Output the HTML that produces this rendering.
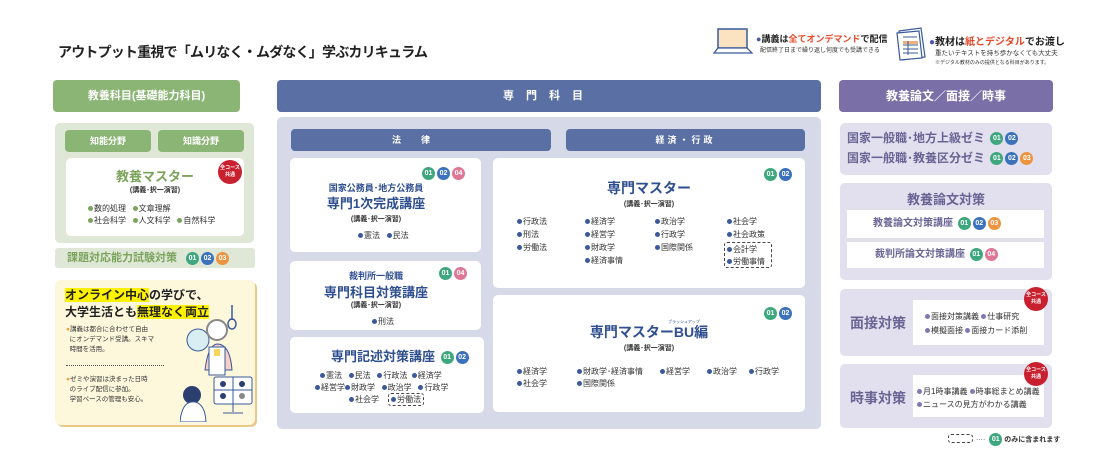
<!DOCTYPE html>
<html><head><meta charset="utf-8"><style>
*{margin:0;padding:0;box-sizing:border-box}
body{width:1115px;height:460px;background:#fff;position:relative;overflow:hidden;font-family:"Liberation Sans","Noto Sans CJK JP",sans-serif;color:#333}
.a{position:absolute}
.c{text-align:center}
.b{font-weight:bold}
.bd{display:inline-block;width:13px;height:13px;border-radius:50%;color:#fff;font-size:7px;font-weight:bold;line-height:13px;text-align:center;vertical-align:middle;margin-left:2px}
.g{background:#3fa77e}.u{background:#3c72bb}.o{background:#ec9440}.p{background:#e07696}
.wb{background:#fff;border-radius:5px}
.li{font-size:8px;color:#333;white-space:nowrap}
.li i{display:inline-block;width:5px;height:5px;border-radius:50%;background:#3c5a9a;margin-right:1px;vertical-align:middle}
.lg i{background:#7ba45c}
.lp i{background:#8278b4}
.red{position:absolute;width:24px;height:24px;border-radius:50%;background:#c8202f;color:#fff;font-size:5px;font-weight:bold;text-align:center;line-height:7px;padding-top:5px}
.nv{color:#2f4f8f}
.dash{border:1px dashed #444;border-radius:3px}
</style></head><body>

<div class="a b" style="left:58px;top:42px;font-size:14px;color:#222;letter-spacing:-0.8px">アウトプット重視で「ムリなく・ムダなく」学ぶカリキュラム</div>

<svg class="a" style="left:713px;top:28px" width="40" height="26" viewBox="0 0 40 26"><rect x="5" y="1" width="29" height="19" fill="#fbe2c0" stroke="#3a5a9a" stroke-width="1.5"/><path d="M1 25 L5 20 H34 L39 25 Z" fill="#fff" stroke="#3a5a9a" stroke-width="1.3"/></svg>
<div class="a b" style="left:756px;top:32px;font-size:9px;color:#222"><span style="color:#4b5aa5">●</span>講義は<span style="color:#e84a2a">全てオンデマンド</span>で配信</div>
<div class="a" style="left:760px;top:45px;font-size:6px;color:#333">配信終了日まで繰り返し何度でも受講できる</div>
<svg class="a" style="left:895px;top:27px" width="32" height="34" viewBox="0 0 32 34"><path d="M4 4 L26 1 L30 30 L7 33 Z" fill="#fff" stroke="#3a5a9a" stroke-width="1.2"/><path d="M2 6 L24 4 L27 31 L5 33 Z" fill="#fff" stroke="#3a5a9a" stroke-width="1.2"/><rect x="8" y="14" width="15" height="3" fill="#f4b07a"/><path d="M8 10h14M8 18h15M8 22h15M8 26h15M13 14v14" stroke="#3a5a9a" stroke-width="1"/></svg>
<div class="a b" style="left:929px;top:33px;font-size:10px;color:#222"><span style="color:#4b5aa5">●</span>教材は<span style="color:#e84a2a">紙とデジタル</span>でお渡し</div>
<div class="a" style="left:935px;top:47px;font-size:6.5px;color:#333">重たいテキストを持ち歩かなくても大丈夫</div>
<div class="a" style="left:935px;top:59px;font-size:5px;color:#333">※デジタル教材のみの提供となる科目があります。</div>

<div class="a c b" style="left:53px;top:80px;width:187px;height:32px;background:#8bb574;border-radius:4px;color:#fff;font-size:11px;line-height:32px">教養科目(基礎能力科目)</div>
<div class="a c b" style="left:277px;top:80px;width:544px;height:32px;background:#5a6fa3;border-radius:4px;color:#fff;font-size:11px;line-height:32px;letter-spacing:12px">専門科目</div>
<div class="a c b" style="left:839px;top:80px;width:214px;height:32px;background:#7b6fa8;border-radius:4px;color:#fff;font-size:12px;line-height:32px">教養論文／面接／時事</div>

<div class="a" style="left:55px;top:123px;width:199px;height:120px;background:#dfe7d6;border-radius:5px"></div>
<div class="a c b" style="left:65px;top:130px;width:86px;height:22px;background:#8bb574;border-radius:4px;color:#fff;font-size:9px;line-height:22px">知能分野</div>
<div class="a c b" style="left:158px;top:130px;width:86px;height:22px;background:#8bb574;border-radius:4px;color:#fff;font-size:9px;line-height:22px">知識分野</div>
<div class="a wb" style="left:66px;top:158px;width:178px;height:78px"></div>
<div class="a c b" style="left:66px;top:166px;width:178px;font-size:13px;color:#7ba45c">教養マスター</div>
<div class="a c b" style="left:66px;top:185px;width:178px;font-size:7px;color:#333">(講義･択一演習)</div>
<div class="red" style="left:218px;top:160px">全コース<br>共通</div>
<div class="a li lg" style="left:88px;top:203px"><i></i>数的処理 &nbsp;&nbsp;<i></i>文章理解</div>
<div class="a li lg" style="left:88px;top:215px"><i></i>社会科学 &nbsp;&nbsp;<i></i>人文科学 &nbsp;&nbsp;<i></i>自然科学</div>
<div class="a" style="left:55px;top:248px;width:200px;height:20px;background:#dfe7d6;border-radius:3px"></div>
<div class="a b" style="left:67px;top:250px;font-size:11px;color:#7ba45c;line-height:16px">課題対応能力試験対策 <span class="bd g" style="margin-left:6px">01</span><span class="bd u">02</span><span class="bd o">03</span></div>

<div class="a" style="left:55px;top:280px;width:200px;height:145px;background:#fdf7dc;border-radius:6px;box-shadow:2px 2px 0 #e8c98a"></div>
<div class="a b" style="left:65px;top:287px;font-size:12px;line-height:17px;color:#222"><span style="background:#fff200">オンライン中心</span>の学びで、<br>大学生活とも<span style="background:#fff200">無理なく両立</span></div>
<div class="a" style="left:66px;top:325px;font-size:6.5px;line-height:10px;color:#333"><span style="color:#f0a040">●</span>講義は都合に合わせて自由<br>&nbsp;&nbsp;にオンデマンド受講。スキマ<br>&nbsp;&nbsp;時間を活用。</div>
<div class="a" style="left:66px;top:365px;width:98px;border-top:1px dotted #555"></div>
<div class="a" style="left:66px;top:375px;font-size:6.5px;line-height:10px;color:#333"><span style="color:#f0a040">●</span>ゼミや演習は決まった日時<br>&nbsp;&nbsp;のライブ配信に参加。<br>&nbsp;&nbsp;学習ペースの管理も安心。</div>
<svg class="a" style="left:180px;top:300px" width="75" height="122" viewBox="0 0 75 122">
<path d="M52 5v15" stroke="#3a5a9a" stroke-width="1.5"/><ellipse cx="52" cy="24" rx="4" ry="5" fill="none" stroke="#3a5a9a" stroke-width="1.5"/>
<circle cx="18" cy="40" r="11" fill="#d8eef2" stroke="#3a5a9a"/>
<circle cx="37" cy="30" r="10" fill="#fff" stroke="#888" stroke-width="2"/>
<path d="M25 70 Q28 45 37 44 Q50 44 52 70 Z" fill="#f7cfc4" stroke="#3a5a9a"/>
<rect x="29" y="47" width="16" height="28" fill="#fff" stroke="#3a5a9a"/>
<rect x="34" y="49" width="6" height="7" fill="#f6d55a"/>
<circle cx="12" cy="95" r="9" fill="#2b3f70"/><path d="M0 122 Q2 100 15 102 Q25 104 26 122Z" fill="#fff" stroke="#3a5a9a"/>
<rect x="34" y="77" width="38" height="27" rx="2" fill="#fff" stroke="#3a5a9a"/>
<path d="M53 77v27M34 90h38M53 104v8M43 113h20" stroke="#3a5a9a"/>
<circle cx="43" cy="84" r="3" fill="#2b3f70"/><circle cx="62" cy="84" r="3" fill="#2b3f70"/><circle cx="43" cy="96" r="3" fill="#2b3f70"/><circle cx="62" cy="96" r="3" fill="#888"/>
</svg>

<div class="a" style="left:277px;top:117px;width:544px;height:312px;background:#d5d9e8;border-radius:5px"></div>
<div class="a c b" style="left:291px;top:129px;width:260px;height:22px;background:#5a6fa3;border-radius:4px;color:#fff;font-size:9px;line-height:22px;letter-spacing:20px">法律</div>
<div class="a c b" style="left:566px;top:129px;width:239px;height:22px;background:#5a6fa3;border-radius:4px;color:#fff;font-size:9px;line-height:22px;letter-spacing:3px">経済・行政</div>

<div class="a wb" style="left:290px;top:158px;width:191px;height:94px"></div>
<div class="a" style="left:420px;top:165px"><span class="bd g">01</span><span class="bd u">02</span><span class="bd p">04</span></div>
<div class="a c b nv" style="left:290px;top:181px;width:172px;font-size:9px">国家公務員･地方公務員</div>
<div class="a c b nv" style="left:290px;top:193px;width:172px;font-size:13px">専門1次完成講座</div>
<div class="a c b" style="left:290px;top:214px;width:172px;font-size:7px">(講義･択一演習)</div>
<div class="a li" style="left:358px;top:230px"><i></i>憲法 &nbsp;&nbsp;<i></i>民法</div>

<div class="a wb" style="left:290px;top:261px;width:191px;height:69px"></div>
<div class="a" style="left:437px;top:265px"><span class="bd g">01</span><span class="bd p">04</span></div>
<div class="a c b nv" style="left:290px;top:269px;width:172px;font-size:9px">裁判所一般職</div>
<div class="a c b nv" style="left:290px;top:282px;width:172px;font-size:13px">専門科目対策講座</div>
<div class="a c b" style="left:290px;top:300px;width:172px;font-size:7px">(講義･択一演習)</div>
<div class="a li" style="left:372px;top:316px"><i></i>刑法</div>

<div class="a wb" style="left:290px;top:337px;width:194px;height:76px"></div>
<div class="a b nv" style="left:331px;top:346px;font-size:13px">専門記述対策講座 <span class="bd g">01</span><span class="bd u">02</span></div>
<div class="a li" style="left:320px;top:370px"><i></i>憲法 &nbsp;&nbsp;<i></i>民法 &nbsp;&nbsp;<i></i>行政法 &nbsp;<i></i>経済学</div>
<div class="a li" style="left:315px;top:382px"><i></i>経営学<i></i>財政学 &nbsp;&nbsp;<i></i>政治学 &nbsp;&nbsp;<i></i>行政学</div>
<div class="a li" style="left:349px;top:394px"><i></i>社会学 &nbsp;</div>
<div class="a li dash" style="left:388px;top:393px;padding:0 2px"><i></i>労働法</div>

<div class="a wb" style="left:493px;top:158px;width:312px;height:130px"></div>
<div class="a" style="left:762px;top:166px"><span class="bd g">01</span><span class="bd u">02</span></div>
<div class="a c b nv" style="left:493px;top:178px;width:312px;font-size:14px">専門マスター</div>
<div class="a c b" style="left:493px;top:199px;width:312px;font-size:7px">(講義･択一演習)</div>
<div class="a li" style="left:517px;top:215px;line-height:13px"><i></i>行政法<br><i></i>刑法<br><i></i>労働法</div>
<div class="a li" style="left:585px;top:215px;line-height:13px"><i></i>経済学<br><i></i>経営学<br><i></i>財政学<br><i></i>経済事情</div>
<div class="a li" style="left:655px;top:215px;line-height:13px"><i></i>政治学<br><i></i>行政学<br><i></i>国際関係</div>
<div class="a li" style="left:727px;top:215px;line-height:13px"><i></i>社会学<br><i></i>社会政策</div>
<div class="a li dash" style="left:724px;top:242px;width:48px;height:26px;padding:1px 0 0 2px;line-height:12px"><i></i>会計学<br><i></i>労働事情</div>

<div class="a wb" style="left:493px;top:295px;width:312px;height:117px"></div>
<div class="a" style="left:762px;top:305px"><span class="bd g">01</span><span class="bd u">02</span></div>
<div class="a" style="left:668px;top:319px;font-size:4px;color:#2f4f8f">ブラッシュアップ</div>
<div class="a c b nv" style="left:493px;top:322px;width:312px;font-size:14px">専門マスターBU編</div>
<div class="a c b" style="left:493px;top:343px;width:312px;font-size:7px">(講義･択一演習)</div>
<div class="a li" style="left:517px;top:366px;line-height:12px"><i></i>経済学<br><i></i>社会学</div>
<div class="a li" style="left:577px;top:366px;line-height:12px"><i></i>財政学･経済事情<br><i></i>国際関係</div>
<div class="a li" style="left:660px;top:366px"><i></i>経営学</div>
<div class="a li" style="left:707px;top:366px"><i></i>政治学</div>
<div class="a li" style="left:749px;top:366px"><i></i>行政学</div>

<div class="a" style="left:840px;top:123px;width:212px;height:52px;background:#e2e0ee;border-radius:5px"></div>
<div class="a b" style="left:847px;top:130px;font-size:12px;color:#6a6494;line-height:16px;white-space:nowrap">国家一般職･地方上級ゼミ <span class="bd g">01</span><span class="bd u">02</span></div>
<div class="a b" style="left:847px;top:150px;font-size:12px;color:#6a6494;line-height:16px;white-space:nowrap">国家一般職･教養区分ゼミ <span class="bd g">01</span><span class="bd u">02</span><span class="bd o">03</span></div>

<div class="a" style="left:840px;top:183px;width:212px;height:97px;background:#e2e0ee;border-radius:5px"></div>
<div class="a c b" style="left:840px;top:189px;width:212px;font-size:13px;color:#6a6494">教養論文対策</div>
<div class="a" style="left:847px;top:210px;width:197px;height:28px;background:#fff"></div>
<div class="a b" style="left:873px;top:216px;font-size:10px;color:#6a6494;line-height:15px">教養論文対策講座 <span class="bd g">01</span><span class="bd u">02</span><span class="bd o">03</span></div>
<div class="a" style="left:847px;top:242px;width:197px;height:26px;background:#fff"></div>
<div class="a b" style="left:875px;top:247px;font-size:10px;color:#6a6494;line-height:15px">裁判所論文対策講座 <span class="bd g">01</span><span class="bd p">04</span></div>

<div class="a" style="left:840px;top:289px;width:212px;height:67px;background:#e2e0ee;border-radius:5px"></div>
<div class="a b" style="left:850px;top:313px;font-size:14px;color:#6a6494">面接対策</div>
<div class="a" style="left:913px;top:300px;width:131px;height:45px;background:#fff"></div>
<div class="a li lp" style="left:925px;top:310px;line-height:14px"><i></i>面接対策講義 <i></i>仕事研究<br><i></i>模擬面接 <i></i>面接カード添削</div>
<div class="red" style="left:1024px;top:287px">全コース<br>共通</div>

<div class="a" style="left:840px;top:364px;width:212px;height:64px;background:#e2e0ee;border-radius:5px"></div>
<div class="a b" style="left:850px;top:388px;font-size:14px;color:#6a6494">時事対策</div>
<div class="a" style="left:913px;top:375px;width:131px;height:42px;background:#fff"></div>
<div class="a li lp" style="left:917px;top:385px;line-height:13px"><i></i>月1時事講義 <i></i>時事総まとめ講義<br><i></i>ニュースの見方がわかる講義</div>
<div class="red" style="left:1024px;top:362px">全コース<br>共通</div>

<div class="a dash" style="left:948px;top:434px;width:25px;height:9px"></div>
<div class="a" style="left:976px;top:433px;font-size:7px;color:#333;white-space:nowrap">···· <span class="bd g">01</span> <b>のみに含まれます</b></div>
</body></html>
